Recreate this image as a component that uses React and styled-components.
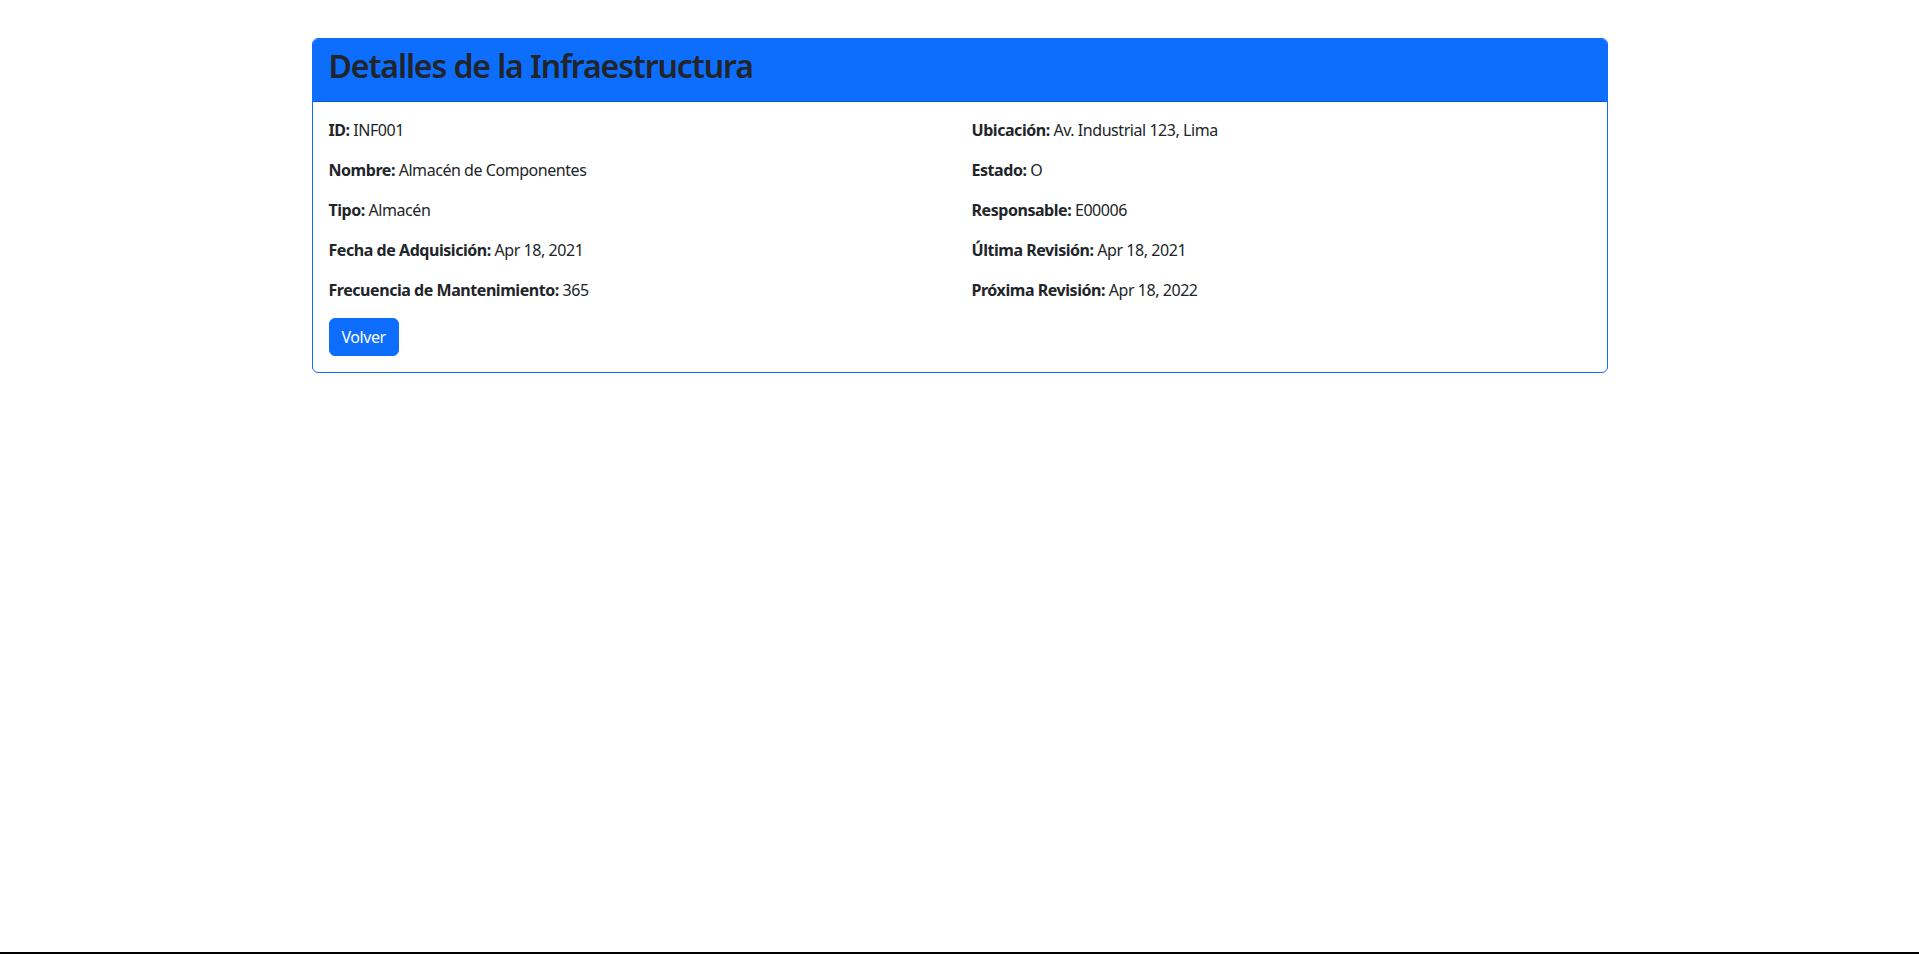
import React from "react";
import styled, { createGlobalStyle } from "styled-components";

const GlobalStyle = createGlobalStyle`
  * { box-sizing: border-box; }
  body {
    margin: 0;
    font-family: "Noto Sans", "Liberation Sans", sans-serif;
    font-size: 16px;
    line-height: 1.5;
    letter-spacing: -0.45px;
    color: #212529;
    background: #fff;
  }
`;

const Page = styled.div`
  min-height: 100vh;
  padding-top: 38px;
  border-bottom: 2px solid #000;
`;

const Container = styled.div`
  max-width: 1320px;
  margin: 0 auto;
  padding: 0 12px;
`;

const Card = styled.div`
  border: 1px solid #0d6efd;
  border-radius: 6px;
  overflow: hidden;
  background: #fff;
`;

const CardHeader = styled.div`
  background: #0d6efd;
  padding: 8px 16px;
  border-bottom: 1px solid rgba(0, 0, 0, 0.175);
`;

const Title = styled.h2`
  margin: 0 0 8px;
  font-size: 32px;
  font-weight: 600;
  line-height: 1.2;
  letter-spacing: -1.1px;
  color: #212529;
`;

const CardBody = styled.div`
  padding: 16px;
`;

const Row = styled.div`
  display: grid;
  grid-template-columns: 1fr 1fr;
  column-gap: 24px;
`;

const Field = styled.p`
  margin: 0 0 16px;
  strong {
    font-weight: 700;
  }
`;

const Button = styled.button`
  font-family: inherit;
  font-size: 16px;
  line-height: 24px;
  letter-spacing: -0.45px;
  padding: 6px 12px;
  color: #fff;
  background: #0d6efd;
  border: 1px solid #0d6efd;
  border-radius: 6px;
  cursor: pointer;
`;

const left = [
  ["ID", "INF001"],
  ["Nombre", "Almacén de Componentes"],
  ["Tipo", "Almacén"],
  ["Fecha de Adquisición", "Apr 18, 2021"],
  ["Frecuencia de Mantenimiento", "365"],
];

const right = [
  ["Ubicación", "Av. Industrial 123, Lima"],
  ["Estado", "O"],
  ["Responsable", "E00006"],
  ["Última Revisión", "Apr 18, 2021"],
  ["Próxima Revisión", "Apr 18, 2022"],
];

function App() {
  return (
    <Page>
      <GlobalStyle />
      <Container>
        <Card>
          <CardHeader>
            <Title>Detalles de la Infraestructura</Title>
          </CardHeader>
          <CardBody>
            <Row>
              <div>
                {left.map(([k, v]) => (
                  <Field key={k}>
                    <strong>{k}:</strong> {v}
                  </Field>
                ))}
              </div>
              <div>
                {right.map(([k, v]) => (
                  <Field key={k}>
                    <strong>{k}:</strong> {v}
                  </Field>
                ))}
              </div>
            </Row>
            <Button>Volver</Button>
          </CardBody>
        </Card>
      </Container>
    </Page>
  );
}

export default App;
